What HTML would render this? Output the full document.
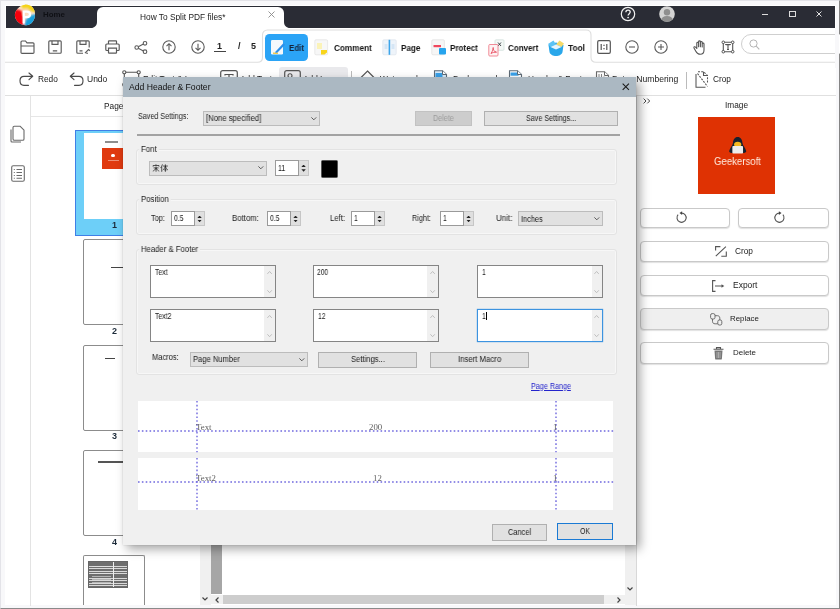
<!DOCTYPE html>
<html>
<head>
<meta charset="utf-8">
<title>Add Header &amp; Footer</title>
<style>
*{box-sizing:border-box;margin:0;padding:0}
html,body{width:840px;height:609px;overflow:hidden;background:#f8f8fa}
body{font-family:"Liberation Sans",sans-serif;color:#222;position:relative}
.a{position:absolute}
.t{position:absolute;white-space:nowrap;line-height:1;color:#1a1a1a;transform:scaleX(1);transform-origin:0 0;will-change:transform}
.b{font-weight:bold}
svg{position:absolute;overflow:visible}
/* app frame */
#frame{left:0;top:0;width:840px;height:609px;border:1px solid #e3e3e8;border-right:1.200px solid #858585;border-bottom:1.300px solid #8a8a8a}
#app{left:5px;top:5px;width:830.500px;height:599.500px;background:#fff}
#titlebar{left:5.500px;top:5.700px;width:829.800px;height:22px;background:#2a2c35}
#tab{left:97px;top:7px;width:187px;height:22px;background:#fff;border-radius:6px 6px 0 0}
/* dialog */
#dlg{left:123px;top:78px;width:513px;height:467px;background:#f0f0f0;box-shadow:4px 4px 10px rgba(0,0,0,.36),0 0 2px rgba(0,0,0,.15)}
#dlgtitle{left:0;top:-0.600px;width:513px;height:19.600px;background:#abb8c2}
.gb{position:absolute;border:1px solid #e3e3e3;border-radius:3px;box-shadow:inset 0 0 0 1px #f7f7f7}
.combo{position:absolute;background:#e1e1e1;border:1px solid #bcbcbc}
.inp{position:absolute;background:#fff;border:1px solid #9a9a9a}
.btn{position:absolute;background:#e1e1e1;border:1px solid #b0b0b0}
.ta{position:absolute;background:#fff;border:1px solid #858585}
.rbtn{position:absolute;background:#fff;border:1px solid #c9c9c9;border-radius:4px;box-shadow:0 1px 1px rgba(0,0,0,.12)}
.thumb{position:absolute;background:#fff;border:1px solid #8c8c8c;border-radius:2px}
.sp{background:#dfdfdf;border:1px solid #c6c6c6;border-left:0}
.sp:before,.sp:after{content:"";position:absolute;left:2.4px;width:4.400px;height:2.400px;background:#222}
.sp:before{top:3.500px;clip-path:polygon(50% 0,100% 100%,0 100%)}
.sp:after{bottom:2.800px;clip-path:polygon(0 0,100% 0,50% 100%)}
.hd{height:1.5px;background:repeating-linear-gradient(90deg,#6f68de 0 1.7px,transparent 1.7px 3.85px);opacity:.9}
.vd{width:1.5px;background:repeating-linear-gradient(180deg,#6f68de 0 1.7px,transparent 1.7px 3.85px);opacity:.9}
.pv{font-family:"Liberation Serif",serif;font-size:8.8px;color:#5e5e5e}
.tbl{background:repeating-linear-gradient(180deg,#6e6e6e 0 1.6px,#d9d9d9 1.6px 2.4px);border:1px solid #666}
.tbl:before{content:"";position:absolute;left:24px;top:0;width:1.2px;height:100%;background:#eee}
.tbl:after{content:"";position:absolute;left:3px;top:2px;width:19px;height:21px;background:repeating-linear-gradient(180deg,transparent 0 2.4px,#e4e4e4 2.4px 3.2px);opacity:.6}
</style>
</head>
<body>
<div id="frame" class="a"></div>
<div id="app" class="a"></div>
<div id="titlebar" class="a"></div>
<div id="tab" class="a"></div>
<!--TOP--><!-- title bar items -->
<svg style="left:13.500px;top:4.300px" width="22" height="22" viewBox="0 0 21 21">
<defs><clipPath id="lc"><path d="M10.500 0.600C15.700 0.200 19.900 4 20.100 9.200C20.300 15.200 16.700 20 11.500 20.200C6.800 20.400 1.600 16.800 0.900 11.500C0.300 6.500 5 1.100 10.500 0.600Z"/></clipPath><filter id="lb" x="-20%" y="-20%" width="140%" height="140%"><feGaussianBlur stdDeviation="1.100"/></filter></defs>
<g clip-path="url(#lc)"><rect width="21" height="21" fill="#fbe3cf"/>
<g filter="url(#lb)"><path d="M-2 4L8.500 6.500L9 22L-2 22Z" fill="#f5060c"/>
<path d="M5 -2L23 -2L23 9L14 6L8 4.500Z" fill="#f4d416"/>
<path d="M23 8.500L23 23L9 23L11.500 14.500L16 11Z" fill="#169fdc"/>
<path d="M8 5L12.500 4L15 7L14 10L10.500 11.500L8.500 9Z" fill="#fdd9bd"/></g>
<path d="M9.300 17.800V7.200H12.300C14.300 7.200 15.300 8.300 15.300 9.900C15.300 11.600 14.200 12.600 12.300 12.600H10" stroke="#fff" stroke-width="2.100" fill="none" stroke-linecap="round"/>
</g></svg>
<div class="t b" style="left:43px;top:11px;font-size:7.900px;color:#0f1015">Home</div>
<!-- tab flare -->
<svg style="left:91px;top:22px" width="6" height="6" viewBox="0 0 6 6"><path d="M6 0V6H0C3.5 6 6 3.5 6 0Z" fill="#fff"/></svg>
<svg style="left:284px;top:22px" width="6" height="6" viewBox="0 0 6 6"><path d="M0 0V6H6C2.500 6 0 3.500 0 0Z" fill="#fff"/></svg>
<div class="t" style="left:140px;top:13.400px;font-size:8.33px;color:#222">How To Split PDF files*</div>
<svg style="left:267.500px;top:10.500px" width="7" height="7" viewBox="0 0 7 7"><path d="M0.500 0.500L6.500 6.500M6.500 0.500L0.500 6.500" stroke="#8a8a8a" stroke-width="0.9" fill="none"/></svg>
<svg style="left:620px;top:6px" width="16" height="16" viewBox="0 0 16 16"><circle cx="8" cy="8" r="6.700" stroke="#f2f2f2" stroke-width="1.200" fill="none"/><path d="M5.900 6.300C5.900 4.900 6.900 4.200 8.100 4.200C9.300 4.200 10.200 5 10.200 6.100C10.200 7.600 8.100 7.700 8.100 9.500" stroke="#f2f2f2" stroke-width="1.300" fill="none"/><circle cx="8.100" cy="11.500" r="0.850" fill="#f2f2f2"/></svg>
<svg style="left:659px;top:6px" width="16" height="16" viewBox="0 0 16 16"><defs><clipPath id="av"><circle cx="8" cy="8" r="7.800"/></clipPath></defs><circle cx="8" cy="8" r="7.800" fill="#d4d4d4"/><g clip-path="url(#av)"><circle cx="8" cy="6.300" r="3.200" fill="#8f8f8f"/><ellipse cx="8" cy="14.500" rx="6" ry="4.600" fill="#8f8f8f"/></g></svg>
<div class="a" style="left:762px;top:13.600px;width:6px;height:1px;background:#dcdcdc"></div>
<div class="a" style="left:789px;top:11.300px;width:6.500px;height:5.400px;border:1px solid #dcdcdc;border-top-width:1.800px"></div>
<svg style="left:816.200px;top:11.200px" width="6" height="6" viewBox="0 0 6 6"><path d="M0.500 0.500L5.500 5.500M5.500 0.500L0.500 5.500" stroke="#e2e2e2" stroke-width="1" fill="none"/></svg>

<!-- toolbar 1 outline -->
<svg style="left:5px;top:28px" width="831" height="36" viewBox="0 0 831 36"><path d="M0 34.200H252.500C255.500 34.200 257.500 32.200 257.500 29.200V7C257.500 4 259.500 2 262.500 2H581C584 2 586 4 586 7V29.200C586 32.200 588 34.200 591 34.200H831" stroke="#dedede" stroke-width="1.100" fill="none"/></svg>
<!-- file icons -->
<svg style="left:19.500px;top:40px" width="15" height="14" viewBox="0 0 15 14"><path d="M1 12.500V2C1 1.400 1.400 1 2 1H5.500L7 2.800H13C13.600 2.800 14 3.200 14 3.800V12.500C14 13 13.600 13.300 13 13.300H2C1.400 13.300 1 13 1 12.500ZM1 6H14" stroke="#5a5a5a" stroke-width="1.150" fill="none"/></svg>
<svg style="left:48px;top:40px" width="14" height="14" viewBox="0 0 14 14"><path d="M1.800 0.800H12.200C12.800 0.800 13.200 1.200 13.200 1.800V12.200C13.200 12.800 12.800 13.200 12.200 13.200H1.800C1.200 13.200 0.800 12.800 0.800 12.200V1.800C0.800 1.200 1.200 0.800 1.800 0.800ZM4 0.800V4.300H10V0.800M4.800 10.800H9.200" stroke="#5a5a5a" stroke-width="1.150" fill="none"/></svg>
<svg style="left:76px;top:40px" width="15" height="14" viewBox="0 0 15 14"><path d="M7 13.200H1.800C1.200 13.200 0.800 12.800 0.800 12.200V1.800C0.800 1.200 1.200 0.800 1.800 0.800H12.200C12.800 0.800 13.200 1.200 13.200 1.800V7.500M4 0.800V4.300H10V0.800M3.500 10.800H6.500M9 13.200L12.500 9.500L14 10.800M10.200 13.200H12" stroke="#5a5a5a" stroke-width="1.150" fill="none"/></svg>
<svg style="left:105px;top:40px" width="15" height="14" viewBox="0 0 15 14"><path d="M3.500 4V1.300C3.500 1 3.800 0.800 4.100 0.800H10.900C11.200 0.800 11.500 1 11.500 1.300V4M3.500 10.500H1.800C1.200 10.500 0.800 10.100 0.800 9.500V5C0.800 4.400 1.200 4 1.800 4H13.200C13.800 4 14.200 4.400 14.200 5V9.500C14.200 10.100 13.800 10.500 13.200 10.500H11.500M3.500 8.200H11.500V12.700C11.500 13 11.200 13.200 10.900 13.200H4.100C3.800 13.200 3.500 13 3.500 12.700Z" stroke="#5a5a5a" stroke-width="1.200" fill="none"/></svg>
<svg style="left:134px;top:40.500px" width="14" height="13" viewBox="0 0 14 13"><g stroke="#5a5a5a" stroke-width="1.100" fill="none"><circle cx="2.700" cy="6.500" r="1.800"/><circle cx="11" cy="2.300" r="1.800"/><circle cx="11" cy="10.700" r="1.800"/><path d="M4.300 5.700L9.400 3.100M4.300 7.300L9.400 9.900"/></g></svg>
<svg style="left:162px;top:40px" width="14" height="14" viewBox="0 0 14 14"><g stroke="#5a5a5a" stroke-width="1.100" fill="none"><circle cx="7" cy="7" r="6.200"/><path d="M7 10.300V3.900M4.500 6.200L7 3.700L9.500 6.200"/></g></svg>
<svg style="left:190.500px;top:40px" width="14" height="14" viewBox="0 0 14 14"><g stroke="#5a5a5a" stroke-width="1.100" fill="none"><circle cx="7" cy="7" r="6.200"/><path d="M7 3.700V10.100M4.500 7.800L7 10.300L9.500 7.800"/></g></svg>
<div class="t b" style="left:217px;top:41.500px;font-size:9px;color:#222">1</div>
<div class="a" style="left:214px;top:51px;width:11.500px;height:1px;background:#444"></div>
<div class="t b" style="left:237.500px;top:41.500px;font-size:9px;color:#222">/</div>
<div class="t b" style="left:251px;top:41.500px;font-size:9px;color:#222">5</div>

<!-- mode tabs -->
<div class="a" style="left:264.500px;top:34.400px;width:43.200px;height:27px;background:#2ba4f6;border-radius:4.500px"></div>
<svg style="left:270px;top:39px" width="16" height="17" viewBox="0 0 16 17"><rect x="1" y="1" width="12" height="14.500" rx="1.200" fill="#f4f8fc"/><path d="M3 14.200H8" stroke="#f2c230" stroke-width="1.300"/><path d="M5.800 12.200L13.300 4.200L15 5.800L7.500 13.500L5.300 14Z" fill="#2d8fe9"/></svg>
<div class="t b" style="left:289px;top:43.700px;font-size:8.480px;color:#14233a;transform:scaleX(0.940)">Edit</div>
<svg style="left:314px;top:39px" width="15" height="17" viewBox="0 0 15 17"><rect x="0.800" y="0.800" width="12.800" height="15" rx="1.200" fill="#f7f7f7" stroke="#e3e3e3" stroke-width="0.800"/><rect x="3" y="4" width="5" height="6" fill="#fbf3b8"/><path d="M7 11H13V13.500L10.500 15.500H7Z" fill="#f8d51c"/></svg>
<div class="t b" style="left:334px;top:43.700px;font-size:8.734px;color:#151515;transform:scaleX(0.940)">Comment</div>
<svg style="left:382px;top:39px" width="15" height="17" viewBox="0 0 15 17"><rect x="0.800" y="0.800" width="13.400" height="15" rx="1.200" fill="#eef4fa" stroke="#dfe6ee" stroke-width="0.800"/><rect x="6.600" y="0.800" width="1.600" height="15" fill="#3ca5ea"/><rect x="2.500" y="5" width="3" height="5" fill="#d5e6f5"/><rect x="9.500" y="5" width="3" height="5" fill="#d5e6f5"/></svg>
<div class="t b" style="left:401px;top:43.700px;font-size:8.650px;color:#151515;transform:scaleX(0.940)">Page</div>
<svg style="left:430.500px;top:39px" width="16" height="17" viewBox="0 0 16 17"><rect x="0.800" y="0.800" width="12.600" height="15" rx="1.200" fill="#f6f6f6" stroke="#e2e2e2" stroke-width="0.800"/><rect x="2.500" y="6" width="7.500" height="2.200" fill="#f0485e"/><rect x="8" y="9" width="7" height="6.500" rx="1" fill="#26a4ee"/></svg>
<div class="t b" style="left:450px;top:43.700px;font-size:8.618px;color:#151515;transform:scaleX(0.940)">Protect</div>
<svg style="left:488px;top:38.500px" width="17" height="18" viewBox="0 0 17 18"><rect x="7" y="0.800" width="9" height="10.500" rx="1" fill="#f3f8f6" stroke="#d2e1dc" stroke-width="0.800"/><path d="M10 3.500L13 7M13 3.500L10 7" stroke="#30353a" stroke-width="0.900"/><rect x="0.800" y="5.500" width="9.200" height="11.500" rx="1" fill="#fdf2f3" stroke="#ef7f8c" stroke-width="0.900"/><path d="M3 14.500C4.500 12 5.500 10 5.200 8.500C4.500 10.500 6 12.500 8.500 13.200C6.500 13 4.500 13.500 3 14.500Z" stroke="#e9495c" stroke-width="0.900" fill="none"/></svg>
<div class="t b" style="left:507.500px;top:43.700px;font-size:8.554px;color:#151515;transform:scaleX(0.940)">Convert</div>
<svg style="left:547px;top:38.500px" width="18" height="18" viewBox="0 0 18 18"><path d="M1.500 6L9 3.500L16.500 6L15.500 13C15 15.500 12 17 9 17C6 17 3 15.500 2.500 13Z" fill="#2aa7ea"/><path d="M1 5L6.500 1.500L9 5.500L3.500 8Z" fill="#5cc3f4"/><path d="M9 5.500L12.500 1.500L17 4.500L14.500 8Z" fill="#f5d96a"/><path d="M3.500 8L9 5.500L14.500 8L9 10.500Z" fill="#e6f4fc"/></svg>
<div class="t b" style="left:568px;top:43.700px;font-size:8.851px;color:#151515;transform:scaleX(0.940)">Tool</div>

<!-- right tools -->
<svg style="left:597px;top:40px" width="14" height="14" viewBox="0 0 14 14"><rect x="0.700" y="0.700" width="12.600" height="12.600" rx="1.300" stroke="#555" stroke-width="1.200" fill="none"/><path d="M4.200 4V10M9.800 4V10" stroke="#555" stroke-width="1.200"/><rect x="6.400" y="4.700" width="1.200" height="1.300" fill="#555"/><rect x="6.400" y="8" width="1.200" height="1.300" fill="#555"/></svg>
<svg style="left:625px;top:40px" width="14" height="14" viewBox="0 0 14 14"><circle cx="7" cy="7" r="6.200" stroke="#5a5a5a" stroke-width="1.100" fill="none"/><path d="M4 7H10" stroke="#5a5a5a" stroke-width="1.100"/></svg>
<svg style="left:653.500px;top:40px" width="14" height="14" viewBox="0 0 14 14"><circle cx="7" cy="7" r="6.200" stroke="#5a5a5a" stroke-width="1.100" fill="none"/><path d="M4 7H10M7 4V10" stroke="#5a5a5a" stroke-width="1.100"/></svg>
<svg style="left:692.500px;top:39.500px" width="14" height="15" viewBox="0 0 14 15"><path d="M3.800 8.500V3.200C3.800 2 5.600 2 5.600 3.200V6.800V1.800C5.600 0.600 7.400 0.600 7.400 1.800V6.800V2.400C7.400 1.200 9.200 1.200 9.200 2.400V7V4C9.200 2.800 11 2.800 11 4V10C11 13 9.500 14.300 7.200 14.300C5 14.300 4 13.300 2.800 11.200L1 8C0.500 7 1.800 6.200 2.600 7.200Z" stroke="#555" stroke-width="1.100" fill="none" stroke-linejoin="round"/></svg>
<svg style="left:721px;top:40px" width="14" height="14" viewBox="0 0 14 14"><g stroke="#555" stroke-width="1.100" fill="none"><path d="M2.300 2.300H11.700V11.700H2.300Z"/><path d="M4.700 5V4.600H9.300V5M7 4.600V9.500M6 9.500H8"/></g><g fill="#fff" stroke="#555" stroke-width="1"><circle cx="2.300" cy="2.300" r="1.300"/><circle cx="11.700" cy="2.300" r="1.300"/><circle cx="2.300" cy="11.700" r="1.300"/><circle cx="11.700" cy="11.700" r="1.300"/></g></svg>
<div class="a" style="left:741px;top:34px;width:110px;height:19.500px;border:1px solid #cfcfcf;border-radius:10px;background:#fff"></div>
<svg style="left:748.500px;top:38.500px" width="11" height="11" viewBox="0 0 11 11"><circle cx="4.500" cy="4.500" r="3.600" stroke="#b5b5b5" stroke-width="1" fill="none"/><path d="M7.200 7.200L10.300 10.300" stroke="#b5b5b5" stroke-width="1.100"/></svg>

<div class="a" style="left:835.300px;top:28px;width:3.500px;height:40px;background:#f8f8fa"></div>
<!-- toolbar 2 -->
<div class="a" style="left:5px;top:94.500px;width:831px;height:1.200px;background:#e0e0e0"></div>
<svg style="left:19px;top:72px" width="15" height="15" viewBox="0 0 15 15"><path d="M10 1L13.700 4.300L10 7.600M13.500 4.300H5C2.500 4.300 1 6 1 8.700C1 11.400 2.500 13.300 5 13.300H9.500" stroke="#4a4a4a" stroke-width="1.150" fill="none" stroke-linecap="round" stroke-linejoin="round"/></svg>
<div class="t" style="left:38px;top:74.600px;font-size:8.300px;color:#222">Redo</div>
<svg style="left:69px;top:72px" width="15" height="15" viewBox="0 0 15 15"><path d="M5 1L1.300 4.300L5 7.600M1.500 4.300H10C12.500 4.300 14 6 14 8.700C14 11.400 12.500 13.300 10 13.300H5.500" stroke="#4a4a4a" stroke-width="1.150" fill="none" stroke-linecap="round" stroke-linejoin="round"/></svg>
<div class="t" style="left:87px;top:74.600px;font-size:8.500px;color:#222">Undo</div>
<svg style="left:122px;top:69.500px" width="19" height="17" viewBox="0 0 19 17"><g stroke="#555" stroke-width="1.100" fill="#fff"><path d="M2.300 2.300H16.700V14.700H2.300Z" fill="none"/><circle cx="2.300" cy="2.300" r="1.600"/><circle cx="16.700" cy="2.300" r="1.600"/><circle cx="2.300" cy="14.700" r="1.600"/><circle cx="16.700" cy="14.700" r="1.600"/></g></svg>
<div class="t" style="left:143px;top:75.000px;font-size:8.300px;color:#222">Edit Text &amp; Ima</div>
<svg style="left:220px;top:70px" width="18" height="16" viewBox="0 0 18 16"><rect x="0.700" y="0.700" width="16.600" height="14.600" rx="2" stroke="#555" stroke-width="1.200" fill="none"/><path d="M5 5.500V4.500H13V5.500M9 4.500V12M7.500 12H10.500" stroke="#555" stroke-width="1.200" fill="none"/></svg>
<div class="t" style="left:240px;top:75.000px;font-size:8.300px;color:#222">Add Text</div>
<div class="a" style="left:279px;top:66.500px;width:69px;height:26px;background:#e9e9ec;border-radius:3px"></div>
<svg style="left:283.500px;top:70px" width="17" height="16" viewBox="0 0 17 16"><rect x="0.700" y="0.700" width="15.600" height="14.600" rx="2" stroke="#555" stroke-width="1.200" fill="none"/><circle cx="6" cy="5.800" r="2" stroke="#555" stroke-width="1.100" fill="none"/><path d="M1 13L6 9L9 11.500L12 8.500L16 12" stroke="#555" stroke-width="1.100" fill="none"/></svg>
<div class="t" style="left:303px;top:75.000px;font-size:8.300px;color:#222">Add Im</div>
<div class="a" style="left:351px;top:71px;width:1px;height:17px;background:#bbb"></div>
<svg style="left:358.500px;top:69.500px" width="17" height="17" viewBox="0 0 17 17"><path d="M8.500 1L16 8.500L8.500 16L1 8.500Z" stroke="#555" stroke-width="1.200" fill="none"/></svg>
<div class="t" style="left:380px;top:75.000px;font-size:8.300px;color:#222">Watermark</div>
<svg style="left:432.500px;top:70px" width="15" height="16" viewBox="0 0 15 16"><path d="M1.500 0.700H9.500L13.500 4.500V15.300H1.500Z" fill="#d8ecfb" stroke="#5d6a75" stroke-width="1.100"/><rect x="2.500" y="3" width="7" height="5" fill="#39a0e8"/><path d="M9.500 0.700V4.500H13.500" stroke="#5d6a75" stroke-width="1" fill="#fff"/></svg>
<div class="t" style="left:453px;top:75.000px;font-size:8.300px;color:#222">Background</div>
<svg style="left:507.500px;top:70px" width="15" height="16" viewBox="0 0 15 16"><path d="M1.500 0.700H9.500L13.500 4.500V15.300H1.500Z" fill="#fff" stroke="#5d6a75" stroke-width="1.100"/><rect x="2.500" y="2.500" width="8" height="3.200" fill="#39a0e8"/><path d="M9.500 0.700V4.500H13.500" stroke="#5d6a75" stroke-width="1" fill="#fff"/></svg>
<div class="t" style="left:528px;top:75.000px;font-size:8.300px;color:#222">Header &amp; Footer</div>
<svg style="left:594.500px;top:70.800px" width="15" height="16" viewBox="0 0 15 16"><path d="M1.500 0.700H9.500L13.500 4.500V15.300H1.500Z" fill="#fff" stroke="#6a6a6a" stroke-width="1.100"/><path d="M4 3V9M6.500 3V9M9 5.500V9" stroke="#8a8a8a" stroke-width="1"/><path d="M9.500 0.700V4.500H13.500" stroke="#6a6a6a" stroke-width="1" fill="#fff"/></svg>
<div class="t" style="left:611.500px;top:74.600px;font-size:8.590px;color:#222">Bates Numbering</div>
<div class="a" style="left:686px;top:72px;width:1px;height:17px;background:#bbb"></div>
<svg style="left:695px;top:71px" width="14" height="17" viewBox="0 0 14 17"><g stroke="#555" stroke-width="1.050" fill="none"><path d="M3 0.700H8.500L12.500 4.500V12" stroke-dasharray="2 1.200"/><path d="M1 3V16.300H10.500"/><path d="M2.500 2.500L12.500 15.500" stroke-dasharray="2 1.200"/><path d="M8.500 0.700V4.500H12.500"/></g></svg>
<div class="t" style="left:713px;top:74.600px;font-size:8.310px;color:#222">Crop</div>
<!--LEFT-->
<!-- left sidebar -->
<div class="a" style="left:30px;top:95.500px;width:1.200px;height:510px;background:#e3e3e3"></div>
<svg style="left:10px;top:125px" width="15" height="18" viewBox="0 0 15 18"><g stroke="#6a6a6a" stroke-width="1.100" fill="#fff" stroke-linejoin="round"><path d="M1 4.500V16C1 16.600 1.400 17 2 17H11"/><path d="M3 2.500C3 1.700 3.500 1.200 4.300 1.200H10L14 5.200V14C14 14.800 13.500 15.300 12.700 15.300H4.300C3.500 15.300 3 14.800 3 14Z"/></g></svg>
<svg style="left:10.500px;top:164.500px" width="14" height="17" viewBox="0 0 14 17"><g stroke="#6a6a6a" stroke-width="1.100" fill="none"><rect x="0.700" y="0.700" width="12.600" height="15.600" rx="1.500"/><path d="M5.500 4.500H11M5.500 7.500H11M5.500 10.500H11M5.500 13.300H11M2.800 4.500H3.800M2.800 7.500H3.800M2.800 10.500H3.800M2.800 13.300H3.800"/></g></svg>
<!-- thumbnail panel -->
<div class="t" style="left:104px;top:101.500px;font-size:8.300px;color:#222">Page</div>
<div class="a" style="left:31px;top:115.500px;width:180px;height:1.200px;background:#e6e6e6"></div>
<div class="a" style="left:75px;top:130px;width:78px;height:106px;background:#6dcff8;border:1.200px solid #3f7fe6"></div>
<div class="a" style="left:84px;top:133px;width:61px;height:85.500px;background:#fff"></div>
<div class="a" style="left:102px;top:147.500px;width:25px;height:21.500px;background:#e03a10"></div>
<div class="a" style="left:105px;top:141.400px;width:13px;height:1.300px;background:#8e8e8e"></div>
<div class="a" style="left:111.200px;top:154px;width:3.400px;height:3.400px;border-radius:2px;background:#fff"></div>
<div class="a" style="left:107.500px;top:160.300px;width:11px;height:0.800px;background:#ee8f75"></div>
<div class="t b" style="left:112px;top:221.2px;font-size:9px;color:#1d2b3a">1</div>
<div class="thumb" style="left:83px;top:238.500px;width:62px;height:86px"></div>
<div class="a" style="left:110.500px;top:267px;width:13px;height:1.200px;background:#444"></div>
<div class="t b" style="left:112px;top:327.1px;font-size:9px;color:#1d2b3a">2</div>
<div class="thumb" style="left:83px;top:344.500px;width:62px;height:86px"></div>
<div class="a" style="left:105px;top:358px;width:10px;height:1.200px;background:#444"></div>
<div class="t b" style="left:112px;top:432.1px;font-size:9px;color:#1d2b3a">3</div>
<div class="thumb" style="left:83px;top:450px;width:62px;height:85.500px"></div>
<div class="a" style="left:98px;top:460.800px;width:26px;height:2.600px;border-top:1px solid #555;border-bottom:1px solid #555;background:#999"></div>
<div class="t b" style="left:112px;top:537.6px;font-size:9px;color:#1d2b3a">4</div>
<div class="thumb" style="left:83px;top:555px;width:62px;height:49.500px;border-bottom:0;border-radius:2px 2px 0 0"></div>
<div class="a tbl" style="left:88px;top:560.500px;width:39.500px;height:27px"></div>
<!-- thumb scrollbar -->
<div class="a" style="left:200px;top:116.500px;width:10.500px;height:488.500px;background:#f0f0f0"></div>
<svg style="left:202.200px;top:597px" width="6" height="4" viewBox="0 0 6 4"><path d="M0.500 0.500L3 3L5.500 0.500" stroke="#444" stroke-width="1.200" fill="none"/></svg>
<!--RIGHT-->
<!-- right panel -->
<div class="a" style="left:636px;top:95.500px;width:1.200px;height:510px;background:#d8d8d8"></div>
<svg style="left:643px;top:98px" width="8" height="6" viewBox="0 0 8 6"><path d="M0.600 0.600L3 3L0.600 5.400M4.300 0.600L6.700 3L4.300 5.400" stroke="#333" stroke-width="0.900" fill="none"/></svg>
<div class="t" style="left:724.500px;top:101.500px;font-size:8.280px;color:#222">Image</div>
<div class="a" style="left:697.500px;top:116.700px;width:77.500px;height:77.300px;background:#df3203"></div>
<svg style="left:727.500px;top:136px" width="19.400" height="19.500" viewBox="0 0 18 19"><path d="M9 1C11.800 1 13.300 3.500 13.600 6.500C14 9.500 16.500 11.500 17.300 14.500C17.500 15.500 16.500 16.300 15 16.500H3C1.500 16.300 0.500 15.500 0.700 14.500C1.500 11.500 4 9.500 4.400 6.500C4.700 3.500 6.200 1 9 1Z" fill="#18202e"/><ellipse cx="9" cy="8.300" rx="3.500" ry="2.600" fill="#f5b81f"/><rect x="3.800" y="9.800" width="10.400" height="7.200" rx="0.800" fill="#ededed"/></svg>
<div class="t" style="left:713.500px;top:156.050px;font-size:10.600px;color:#ffece0;transform:scaleX(0.906)">Geekersoft</div>
<div class="rbtn" style="left:639.500px;top:207.500px;width:90.500px;height:20.500px"></div>
<div class="rbtn" style="left:737.500px;top:207.500px;width:91.500px;height:20.500px"></div>
<svg style="left:675.500px;top:211px" width="11" height="13" viewBox="0 0 11 13"><path d="M5.500 2.100A4.600 4.600 0 1 1 2.100 3.700" stroke="#555" stroke-width="1.100" fill="none"/><path d="M6.100 0.200L3.500 2.100L6.100 4Z" fill="#444"/></svg>
<svg style="left:774.200px;top:211px" width="11" height="13" viewBox="0 0 11 13"><path d="M5.500 2.100A4.600 4.600 0 1 0 8.900 3.700" stroke="#555" stroke-width="1.100" fill="none"/><path d="M4.900 0.200L7.500 2.100L4.900 4Z" fill="#444"/></svg>
<div class="rbtn" style="left:639.500px;top:241px;width:189.500px;height:21.400px"></div>
<svg style="left:715px;top:246px" width="12" height="11" viewBox="0 0 12 11"><g stroke="#555" stroke-width="1.100" fill="none"><path d="M0.600 4.500V0.600H5.400M11.300 5.500V10.300H6.300M10.900 0.600L0.800 10.100"/></g></svg>
<div class="t" style="left:735px;top:247px;font-size:8.310px;color:#222">Crop</div>
<div class="rbtn" style="left:639.500px;top:275px;width:189.500px;height:21.400px"></div>
<svg style="left:712px;top:279.500px" width="13" height="12" viewBox="0 0 13 12"><g stroke="#555" stroke-width="1.100" fill="none"><path d="M3.500 0.600H0.600V11.400H3.500M3 6H11"/></g><path d="M9.500 4.200L12.300 6L9.500 7.800Z" fill="#555"/></svg>
<div class="t" style="left:732.500px;top:281px;font-size:8.480px;color:#222">Export</div>
<div class="rbtn" style="left:639.500px;top:308.400px;width:189.500px;height:21.400px;background:#efefef"></div>
<svg style="left:709.800px;top:313.200px" width="13" height="13" viewBox="0 0 13 13"><g stroke="#666" stroke-width="0.950" fill="none"><rect x="0.600" y="0.600" width="4.400" height="5.400" rx="1.600"/><rect x="7.800" y="7" width="4" height="5" rx="1.500"/><path d="M2.500 6V8.300C2.500 10 3.500 10.800 5.200 10.800H7.800M9.800 7V5.200C9.800 3.600 8.900 2.700 7.400 2.700H5"/></g></svg>
<div class="t" style="left:730px;top:315px;font-size:7.900px;color:#222">Replace</div>
<div class="rbtn" style="left:639.500px;top:342.300px;width:189.500px;height:21.400px"></div>
<svg style="left:713px;top:346.500px" width="11" height="13" viewBox="0 0 11 13"><path d="M0.500 2.300H10.500M3.500 2V0.600H7.500V2" stroke="#555" stroke-width="1.100" fill="none"/><path d="M1.500 3.500H9.500L8.900 11.700C8.900 12.200 8.500 12.600 8 12.600H3C2.500 12.600 2.100 12.200 2.100 11.700Z" fill="#777"/><path d="M4 5V11M5.500 5V11M7 5V11" stroke="#c4c4c4" stroke-width="0.700"/></svg>
<div class="t" style="left:732.500px;top:348.500px;font-size:7.960px;color:#222">Delete</div>
<!--DOC-->
<!-- document area -->
<div class="a" style="left:211px;top:96px;width:10.500px;height:498px;background:#a6a6a6"></div>
<div class="a" style="left:221.500px;top:96px;width:403px;height:498.500px;background:#fff"></div>
<div class="a" style="left:211px;top:594.500px;width:413.500px;height:9.500px;background:#f0f0f0"></div>
<div class="a" style="left:222.500px;top:594.500px;width:381px;height:9.500px;background:#cdcdcd"></div>
<svg style="left:214.500px;top:596.500px" width="4" height="6" viewBox="0 0 4 6"><path d="M3.500 0.500L1 3L3.500 5.500" stroke="#444" stroke-width="1.200" fill="none"/></svg>
<svg style="left:617px;top:596.500px" width="4" height="6" viewBox="0 0 4 6"><path d="M0.500 0.500L3 3L0.500 5.500" stroke="#444" stroke-width="1.200" fill="none"/></svg>
<div class="a" style="left:625px;top:96px;width:11px;height:509px;background:#f0f0f0"></div>
<svg style="left:627px;top:587px" width="6" height="4" viewBox="0 0 6 4"><path d="M0.500 0.500L3 3L5.500 0.500" stroke="#444" stroke-width="1.200" fill="none"/></svg>
<div id="dlg" class="a">
<div id="dlgtitle" class="a"></div>
<div class="t" style="left:5.5px;top:5.2px;font-size:8.63px;color:#111">Add Header &amp; Footer</div>
<svg style="left:499.200px;top:5px" width="7.600" height="7.600" viewBox="0 0 8 8"><path d="M0.7 0.7L7.3 7.3M7.3 0.7L0.7 7.3" stroke="#1b1b1b" stroke-width="1.1" fill="none"/></svg>
<div class="combo" style="left:79.5px;top:33px;width:117.5px;height:14.5px"></div>
<svg style="left:188.4px;top:38.7px" width="5.600" height="3.300" viewBox="0 0 6 3.500"><path d="M0.400 0.400L3 3L5.600 0.400" stroke="#505050" stroke-width="1" fill="none"/></svg>
<div class="btn" style="left:292px;top:32.5px;width:57px;height:15px;background:#cdcdcd;border-color:#c2c2c2"></div>
<div class="btn" style="left:361px;top:32.5px;width:133.5px;height:15.5px"></div>
<div class="a" style="left:14px;top:56px;width:483px;height:2px;background:#a3a3a3"></div>

<div class="gb" style="left:12.5px;top:71px;width:481.5px;height:35.5px"></div>
<div class="combo" style="left:26px;top:82.5px;width:118px;height:15px"></div>
<svg style="left:28.700px;top:86.300px" width="16.800" height="8" viewBox="0 0 18 9"><g stroke="#1a1a1a" stroke-width="0.8" fill="none"><path d="M4 0.3V1.6M0.8 3V1.7H7.4V3M1.3 4.4H6.9M4.1 2.8V8.7M4 4.6C3.3 6.4 2 7.4 0.5 8M4.2 4.6C4.9 6.4 6.2 7.4 7.7 8"/><path d="M11.3 0.4C10.8 2.2 10 3.6 9.2 4.6M10.5 3V8.8M11.8 2.3H17.4M14.6 0.4V8.8M14.5 2.5C13.9 4.6 12.9 6 11.7 6.9M14.7 2.5C15.3 4.6 16.3 6 17.5 6.9M13.2 6.6H16"/></g></svg>
<svg style="left:135.4px;top:88.2px" width="5.600" height="3.300" viewBox="0 0 6 3.500"><path d="M0.400 0.400L3 3L5.600 0.400" stroke="#505050" stroke-width="1" fill="none"/></svg>
<div class="inp" style="left:152px;top:82px;width:24px;height:15.5px"></div>
<div class="a sp" style="left:176px;top:82px;width:10px;height:15.5px"></div>
<div class="a" style="left:197.5px;top:82px;width:17.5px;height:18px;background:#000;border:1px solid #555;border-radius:1.5px"></div>

<div class="gb" style="left:12.5px;top:121px;width:481.5px;height:35.5px"></div>
<div class="inp" style="left:48px;top:133px;width:24px;height:15px"></div>
<div class="a sp" style="left:72px;top:133px;width:10px;height:15px"></div>
<div class="inp" style="left:144px;top:133px;width:24px;height:15px"></div>
<div class="a sp" style="left:168px;top:133px;width:10px;height:15px"></div>
<div class="inp" style="left:228px;top:133px;width:24px;height:15px"></div>
<div class="a sp" style="left:252px;top:133px;width:10px;height:15px"></div>
<div class="inp" style="left:317px;top:133px;width:24px;height:15px"></div>
<div class="a sp" style="left:341px;top:133px;width:10px;height:15px"></div>
<div class="combo" style="left:395px;top:133px;width:84.5px;height:15px"></div>
<svg style="left:470.9px;top:138.7px" width="5.600" height="3.300" viewBox="0 0 6 3.500"><path d="M0.400 0.400L3 3L5.600 0.400" stroke="#505050" stroke-width="1" fill="none"/></svg>

<div class="gb" style="left:12.5px;top:171px;width:481.5px;height:126px"></div>
<div class="ta" style="left:27px;top:187px;width:125.5px;height:33px"></div>
<div class="ta" style="left:190px;top:187px;width:125.5px;height:33px"></div>
<div class="ta" style="left:354px;top:187px;width:126px;height:33px"></div>
<div class="ta" style="left:27px;top:231px;width:125.5px;height:33px"></div>
<div class="ta" style="left:190px;top:231px;width:125.5px;height:33px"></div>
<div class="ta" style="left:354px;top:231px;width:126px;height:33px;border-color:#3c93e0;box-shadow:0 0 1px #3c93e0"></div>
<div class="a" style="left:362.7px;top:233.5px;width:0.8px;height:8.5px;background:#000"></div>
<div class="a" style="left:141px;top:188px;width:10.500px;height:31px;background:#f0f0f0"></div>
<svg style="left:143.65px;top:192.8px" width="5.200" height="3.200" viewBox="0 0 5.200 3.200"><path d="M0.400 2.900L2.600 0.500L4.800 2.900" stroke="#b9b9b9" stroke-width="0.900" fill="none"/></svg>
<svg style="left:143.65px;top:211.6px" width="5.200" height="3.200" viewBox="0 0 5.200 3.200"><path d="M0.400 0.300L2.600 2.700L4.800 0.300" stroke="#b9b9b9" stroke-width="0.900" fill="none"/></svg>
<div class="a" style="left:141px;top:232px;width:10.500px;height:31px;background:#f0f0f0"></div>
<svg style="left:143.65px;top:236.8px" width="5.200" height="3.200" viewBox="0 0 5.200 3.200"><path d="M0.400 2.900L2.600 0.500L4.800 2.900" stroke="#b9b9b9" stroke-width="0.900" fill="none"/></svg>
<svg style="left:143.65px;top:255.6px" width="5.200" height="3.200" viewBox="0 0 5.200 3.200"><path d="M0.400 0.300L2.600 2.700L4.800 0.300" stroke="#b9b9b9" stroke-width="0.900" fill="none"/></svg>
<div class="a" style="left:304px;top:188px;width:10.500px;height:31px;background:#f0f0f0"></div>
<svg style="left:306.65px;top:192.8px" width="5.200" height="3.200" viewBox="0 0 5.200 3.200"><path d="M0.400 2.900L2.600 0.500L4.800 2.900" stroke="#b9b9b9" stroke-width="0.900" fill="none"/></svg>
<svg style="left:306.65px;top:211.6px" width="5.200" height="3.200" viewBox="0 0 5.200 3.200"><path d="M0.400 0.300L2.600 2.700L4.800 0.300" stroke="#b9b9b9" stroke-width="0.900" fill="none"/></svg>
<div class="a" style="left:304px;top:232px;width:10.500px;height:31px;background:#f0f0f0"></div>
<svg style="left:306.65px;top:236.8px" width="5.200" height="3.200" viewBox="0 0 5.200 3.200"><path d="M0.400 2.900L2.600 0.500L4.800 2.900" stroke="#b9b9b9" stroke-width="0.900" fill="none"/></svg>
<svg style="left:306.65px;top:255.6px" width="5.200" height="3.200" viewBox="0 0 5.200 3.200"><path d="M0.400 0.300L2.600 2.700L4.800 0.300" stroke="#b9b9b9" stroke-width="0.900" fill="none"/></svg>
<div class="a" style="left:468.5px;top:188px;width:10.500px;height:31px;background:#f0f0f0"></div>
<svg style="left:471.15px;top:192.8px" width="5.200" height="3.200" viewBox="0 0 5.200 3.200"><path d="M0.400 2.900L2.600 0.500L4.800 2.900" stroke="#b9b9b9" stroke-width="0.900" fill="none"/></svg>
<svg style="left:471.15px;top:211.6px" width="5.200" height="3.200" viewBox="0 0 5.200 3.200"><path d="M0.400 0.300L2.600 2.700L4.800 0.300" stroke="#b9b9b9" stroke-width="0.900" fill="none"/></svg>
<div class="a" style="left:468.5px;top:232px;width:10.500px;height:31px;background:#f0f0f0"></div>
<svg style="left:471.15px;top:236.8px" width="5.200" height="3.200" viewBox="0 0 5.200 3.200"><path d="M0.400 2.900L2.600 0.500L4.800 2.900" stroke="#b9b9b9" stroke-width="0.900" fill="none"/></svg>
<svg style="left:471.15px;top:255.6px" width="5.200" height="3.200" viewBox="0 0 5.200 3.200"><path d="M0.400 0.300L2.600 2.700L4.800 0.300" stroke="#b9b9b9" stroke-width="0.900" fill="none"/></svg>

<div class="combo" style="left:67px;top:274px;width:117.5px;height:15px"></div>
<svg style="left:175.9px;top:279.7px" width="5.600" height="3.300" viewBox="0 0 6 3.500"><path d="M0.400 0.400L3 3L5.600 0.400" stroke="#505050" stroke-width="1" fill="none"/></svg>
<div class="btn" style="left:195px;top:274px;width:99px;height:15.5px"></div>
<div class="btn" style="left:307px;top:274px;width:99px;height:15.5px"></div>

<div class="a" style="left:14.7px;top:323.3px;width:475.3px;height:51.2px;background:#fff"></div>
<div class="a" style="left:14.7px;top:380.4px;width:475.3px;height:51.6px;background:#fff"></div>
<svg style="left:14.7px;top:351.9px" width="475.3" height="2" viewBox="0 0 475.3 2"><path d="M0 1H475.3" stroke="#6f68de" stroke-width="1.400" stroke-dasharray="1.600 2.250" fill="none"/></svg>
<svg style="left:14.7px;top:402.9px" width="475.3" height="2" viewBox="0 0 475.3 2"><path d="M0 1H475.3" stroke="#6f68de" stroke-width="1.400" stroke-dasharray="1.600 2.250" fill="none"/></svg>
<svg style="left:72.6px;top:323.3px" width="2" height="51.2" viewBox="0 0 2 51.2"><path d="M1 0V51.2" stroke="#6f68de" stroke-width="1.400" stroke-dasharray="1.600 2.250" fill="none"/></svg>
<svg style="left:72.6px;top:380.4px" width="2" height="51.6" viewBox="0 0 2 51.6"><path d="M1 0V51.6" stroke="#6f68de" stroke-width="1.400" stroke-dasharray="1.600 2.250" fill="none"/></svg>
<svg style="left:432.3px;top:323.3px" width="2" height="51.2" viewBox="0 0 2 51.2"><path d="M1 0V51.2" stroke="#6f68de" stroke-width="1.400" stroke-dasharray="1.600 2.250" fill="none"/></svg>
<svg style="left:432.3px;top:380.4px" width="2" height="51.6" viewBox="0 0 2 51.6"><path d="M1 0V51.6" stroke="#6f68de" stroke-width="1.400" stroke-dasharray="1.600 2.250" fill="none"/></svg>
<div class="t pv" style="left:73.2px;top:345.43px">Text</div>
<div class="t pv" style="left:246.4px;top:345.43px">200</div>
<div class="t pv" style="left:430.4px;top:345.43px">1</div>
<div class="t pv" style="left:73.2px;top:396.43px">Text2</div>
<div class="t pv" style="left:249.8px;top:396.43px">12</div>
<div class="t pv" style="left:430.4px;top:396.43px">1</div>

<div class="btn" style="left:368.8px;top:445.5px;width:55.6px;height:17.5px"></div>
<div class="btn" style="left:434px;top:444.5px;width:55.5px;height:17.5px;border:1.5px solid #1a7ad4"></div>
<!--DT-->
<div class="t" style="left:15.20px;top:33.99px;font-size:8.40px;color:#1a1a1a;transform:scaleX(0.858);transform-origin:0 0;">Saved Settings:</div>
<div class="t" style="left:82.50px;top:36.29px;font-size:8.40px;color:#1a1a1a;transform:scaleX(0.921);transform-origin:0 0;">[None specified]</div>
<div class="t" style="left:310.30px;top:36.19px;font-size:8.40px;color:#9c9c9c;transform:scaleX(0.861);transform-origin:0 0;">Delete</div>
<div class="t" style="left:402.50px;top:36.19px;font-size:8.40px;color:#1a1a1a;transform:scaleX(0.855);transform-origin:0 0;">Save Settings...</div>
<div class="t" style="left:18.20px;top:66.59px;font-size:8.40px;color:#1a1a1a;transform:scaleX(0.940);transform-origin:0 0;background:#f0f0f0;box-shadow:-2px 0 0 #f0f0f0,2px 0 0 #f0f0f0">Font</div>
<div class="t" style="left:155.00px;top:85.89px;font-size:8.40px;color:#1a1a1a;transform:scaleX(0.826);transform-origin:0 0;">11</div>
<div class="t" style="left:18.20px;top:116.69px;font-size:8.40px;color:#1a1a1a;transform:scaleX(0.929);transform-origin:0 0;background:#f0f0f0;box-shadow:-2px 0 0 #f0f0f0,2px 0 0 #f0f0f0">Position</div>
<div class="t" style="left:28.00px;top:135.99px;font-size:8.40px;color:#1a1a1a;transform:scaleX(0.882);transform-origin:0 0;">Top:</div>
<div class="t" style="left:50.80px;top:135.99px;font-size:8.40px;color:#1a1a1a;transform:scaleX(0.814);transform-origin:0 0;">0.5</div>
<div class="t" style="left:109.00px;top:135.99px;font-size:8.40px;color:#1a1a1a;transform:scaleX(0.933);transform-origin:0 0;">Bottom:</div>
<div class="t" style="left:146.80px;top:135.99px;font-size:8.40px;color:#1a1a1a;transform:scaleX(0.814);transform-origin:0 0;">0.5</div>
<div class="t" style="left:206.50px;top:135.99px;font-size:8.40px;color:#1a1a1a;transform:scaleX(0.918);transform-origin:0 0;">Left:</div>
<div class="t" style="left:231.30px;top:135.99px;font-size:8.40px;color:#1a1a1a;transform:scaleX(0.809);transform-origin:0 0;">1</div>
<div class="t" style="left:289.00px;top:135.99px;font-size:8.40px;color:#1a1a1a;transform:scaleX(0.866);transform-origin:0 0;">Right:</div>
<div class="t" style="left:320.30px;top:135.99px;font-size:8.40px;color:#1a1a1a;transform:scaleX(0.809);transform-origin:0 0;">1</div>
<div class="t" style="left:372.50px;top:135.99px;font-size:8.40px;color:#1a1a1a;transform:scaleX(0.955);transform-origin:0 0;">Unit:</div>
<div class="t" style="left:398.20px;top:137.09px;font-size:8.40px;color:#1a1a1a;transform:scaleX(0.881);transform-origin:0 0;">Inches</div>
<div class="t" style="left:18.20px;top:166.79px;font-size:8.40px;color:#1a1a1a;transform:scaleX(0.923);transform-origin:0 0;background:#f0f0f0;box-shadow:-2px 0 0 #f0f0f0,2px 0 0 #f0f0f0">Header &amp; Footer</div>
<div class="t" style="left:32.00px;top:189.69px;font-size:8.40px;color:#1a1a1a;transform:scaleX(0.824);transform-origin:0 0;">Text</div>
<div class="t" style="left:194.40px;top:189.69px;font-size:8.40px;color:#1a1a1a;transform:scaleX(0.799);transform-origin:0 0;">200</div>
<div class="t" style="left:359.00px;top:189.69px;font-size:8.40px;color:#1a1a1a;transform:scaleX(0.809);transform-origin:0 0;">1</div>
<div class="t" style="left:32.00px;top:233.69px;font-size:8.40px;color:#1a1a1a;transform:scaleX(0.822);transform-origin:0 0;">Text2</div>
<div class="t" style="left:194.50px;top:233.69px;font-size:8.40px;color:#1a1a1a;transform:scaleX(0.803);transform-origin:0 0;">12</div>
<div class="t" style="left:359.00px;top:233.69px;font-size:8.40px;color:#1a1a1a;transform:scaleX(0.809);transform-origin:0 0;">1</div>
<div class="t" style="left:29.00px;top:275.39px;font-size:8.40px;color:#1a1a1a;transform:scaleX(0.896);transform-origin:0 0;">Macros:</div>
<div class="t" style="left:69.50px;top:276.89px;font-size:8.40px;color:#1a1a1a;transform:scaleX(0.907);transform-origin:0 0;">Page Number</div>
<div class="t" style="left:227.50px;top:277.49px;font-size:8.40px;color:#1a1a1a;transform:scaleX(0.910);transform-origin:0 0;">Settings...</div>
<div class="t" style="left:335.00px;top:277.49px;font-size:8.40px;color:#1a1a1a;transform:scaleX(0.926);transform-origin:0 0;">Insert Macro</div>
<div class="t" style="left:407.80px;top:304.29px;font-size:8.40px;color:#2424cc;transform:scaleX(0.861);transform-origin:0 0;text-decoration:underline">Page Range</div>
<div class="t" style="left:385.20px;top:449.69px;font-size:8.40px;color:#1a1a1a;transform:scaleX(0.887);transform-origin:0 0;">Cancel</div>
<div class="t" style="left:457.00px;top:448.69px;font-size:8.40px;color:#1a1a1a;transform:scaleX(0.832);transform-origin:0 0;">OK</div>
<!--DTEND-->
<!--DLGEND-->
</div>
</body>
</html>
